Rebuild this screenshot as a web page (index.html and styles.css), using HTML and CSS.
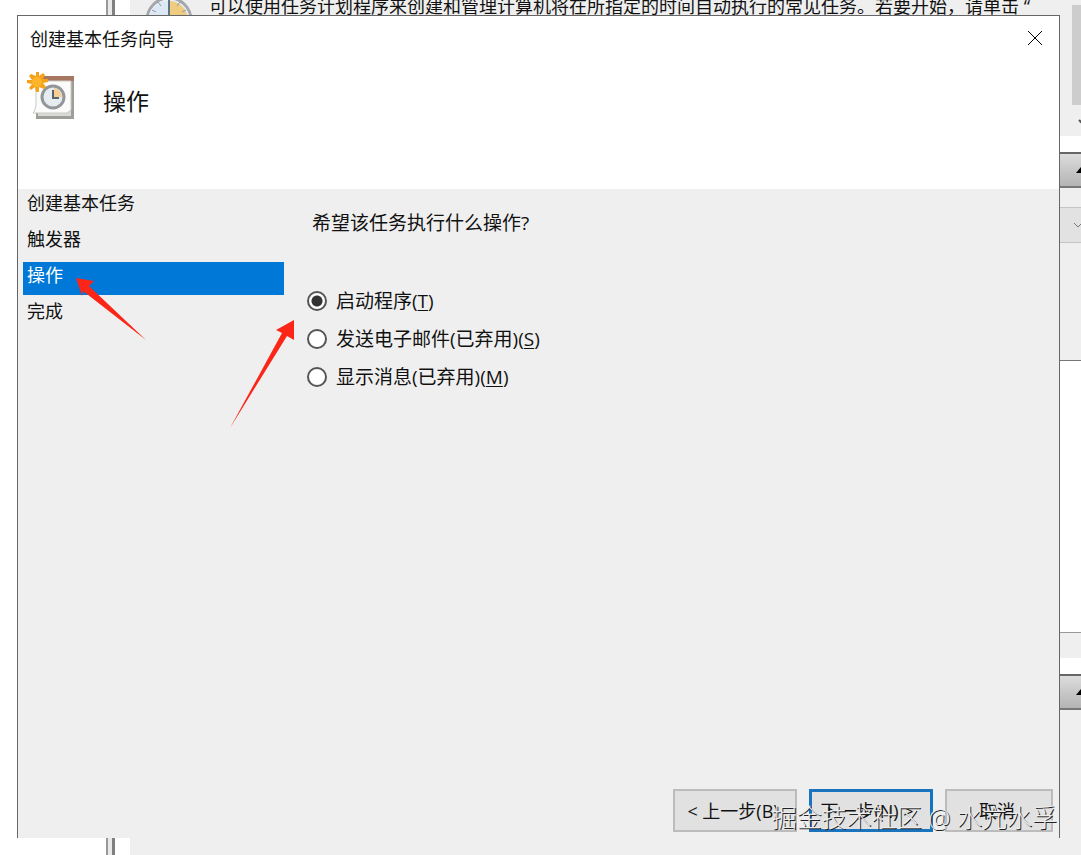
FILE: index.html
```
<!DOCTYPE html>
<html lang="zh-CN">
<head>
    <meta charset="UTF-8">
    <title>创建基本任务向导</title>
    <meta name="viewport" content="width=device-width, initial-scale=1.0">
    <link rel="stylesheet" href="styles.css">
</head>
<body>
    <!-- Task scheduler window behind the wizard -->
    <div class="window">
        <div class="tree"></div>
        <div class="splitter"></div>
        <div class="overview">
            <svg class="overview-icon" viewBox="0 0 48 48">
                <circle cx="24" cy="24" r="22" fill="#dce9f4" stroke="#a4a7ab" stroke-width="3"/>
                <circle cx="24" cy="24" r="20" fill="none" stroke="#eef1f3" stroke-width="1"/>
                <path d="M25 5a19 19 0 0 1 18 19H25z" fill="#f0cc80"/>
                <path d="M24 3v22" stroke="#5f7485" stroke-width="2"/>
                <path d="M7 14l4 2M13 6l3 4M35 6l-3 4M41 14l-4 2" stroke="#8d9ba8" stroke-width="1"/>
            </svg>
            <p class="overview-text">可以使用任务计划程序来创建和管理计算机将在所指定的时间自动执行的常见任务。若要开始，请单击 “</p>
        </div>
        <div class="side">
            <div class="side-scroll">
                <div class="thumb"></div>
                <svg class="side-arrow" viewBox="0 0 10 8"><path d="M1 1l4 4 4-4" fill="none" stroke="#555" stroke-width="2"/></svg>
            </div>
            <div class="side-header">
                <svg class="side-arrow" viewBox="0 0 10 8"><path d="M0 7l5-6 5 6z" fill="#000"/></svg>
            </div>
            <div class="side-filter">
                <svg class="side-arrow" viewBox="0 0 10 8"><path d="M1 2l4 4 4-4" fill="none" stroke="#777" stroke-width="1"/></svg>
            </div>
            <div class="side-panel"></div>
            <div class="side-list"></div>
            <div class="side-strip"></div>
            <div class="side-header">
                <svg class="side-arrow" viewBox="0 0 10 8"><path d="M0 7l5-6 5 6z" fill="#000"/></svg>
            </div>
        </div>
    </div>

    <form class="dialog">
        <header class="dialog-header">
            <div class="title-bar">
                <span>创建基本任务向导</span>
                <button type="button" class="close" aria-label="关闭">
                    <svg viewBox="0 0 16 16"><path d="M1 1l14 14M15 1L1 15" stroke="#000" stroke-width="1"/></svg>
                </button>
            </div>
            <div class="page-title">
                <svg class="task-icon" viewBox="0 0 48 48">
                    <path d="M9 8h38v39H9z" fill="#9d9d99"/>
                    <path d="M11 10h33v34H11z" fill="#d9d9d5"/>
                    <path d="M10 4h37v5H10z" fill="#a77762"/>
                    <path d="M9 9h35v29l-4 3H6c3-4 3-8 3-12z" fill="#fbfbfa" stroke="#c9c9c5"/>
                    <circle cx="26" cy="25" r="11" fill="#e6edf1" stroke="#929599" stroke-width="3"/>
                    <path d="M27 16a9 9 0 0 1 8 9h-8z" fill="#f6ce94"/>
                    <path d="M26 18v8h6" fill="none" stroke="#59636d" stroke-width="2"/>
                    <path d="M9 0h3v4l4-3 2 2-2 4h5v3l-5 1 3 4-2 2-5-2v5H9l-1-5-4 3-2-2 3-4-5-1V8h5L2 4l2-2 5 2z" fill="#f5a21b"/>
                    <circle cx="10" cy="10" r="5" fill="#fdb52c"/>
                </svg>
                <h1>操作</h1>
            </div>
        </header>

        <div class="dialog-body">
            <ul class="steps">
                <li>创建基本任务</li>
                <li>触发器</li>
                <li class="active">操作</li>
                <li>完成</li>
            </ul>
            <fieldset class="options">
                <legend>希望该任务执行什么操作?</legend>
                <label><input type="radio" name="action" checked>启动程序(<u>T</u>)</label>
                <label><input type="radio" name="action">发送电子邮件(已弃用)(<u>S</u>)</label>
                <label><input type="radio" name="action">显示消息(已弃用)(<u>M</u>)</label>
            </fieldset>
        </div>

        <footer class="buttons">
            <button type="button">&lt; 上一步(B)</button>
            <button type="button" class="primary">下一步(N) &gt;</button>
            <button type="button" class="cancel">取消</button>
        </footer>

        <svg class="arrow arrow-step" viewBox="0 0 70 62"><path d="M0 0l18 3-5 5 57 54L7 13l-1 5z" fill="#fb2617"/></svg>
        <svg class="arrow arrow-option" viewBox="0 0 64 108"><path d="M64 0v20l-7-4L0 108 52 13l-6-3z" fill="#fb2617"/></svg>
    </form>

    <div class="watermark">掘金技术社区 @ 水亢水孚</div>
</body>
</html>
```
FILE: styles.css
```
* { box-sizing: border-box; }
body {
    margin: 0;
    min-height: 100vh;
    position: relative;
    overflow: hidden;
    background: #fff;
    color: #111;
    font-family: "Open Sans", "Noto Sans CJK SC", sans-serif;
    font-size: 18px;
}
svg { display: block; }

/* Background window */
.window {
    display: flex;
    height: 100vh;
}
.tree { width: 106px; }
.splitter {
    width: 9px;
    background: #e9e9e9;
    border-left: 2px solid #999;
    border-right: 3px solid #808080;
}
.overview {
    flex: 1;
    display: flex;
    align-items: flex-start;
    gap: 16px;
    margin-left: 15px;
    padding-left: 15px;
    background: #efefef;
    white-space: nowrap;
    overflow: hidden;
}
.overview-icon { width: 48px; height: 48px; margin-top: -4px; }
.overview-text { margin: -6px 0 0; line-height: 24px; }
.side {
    display: flex;
    flex-direction: column;
    width: 21px;
    background: #efefef;
    overflow: hidden;
}
.side-scroll {
    height: 152px;
    padding: 5px 0 0 12px;
    border-bottom: 16px solid #fff;
}
.thumb { height: 100px; margin-bottom: 14px; background: #cdcdcd; }
.side-arrow { flex-shrink: 0; width: 10px; height: 8px; margin-left: 16px; }
.side-scroll .side-arrow { margin-left: 6px; }
.side-header {
    display: flex;
    align-items: center;
    height: 36px;
    border-top: 2px solid #666;
    border-bottom: 2px solid #777;
    background: linear-gradient(#dcdcdc, #b4b4b4);
}
.side-filter {
    display: flex;
    align-items: center;
    height: 36px;
    margin-top: 19px;
    border: solid #c4c4c4;
    border-width: 1px 0;
    background: #e2e2e2;
}
.side-filter .side-arrow { margin-left: 13px; }
.side-panel { height: 118px; border-bottom: 1px solid #777; }
.side-list { height: 271px; background: #fff; }
.side-strip {
    height: 42px;
    border-top: 1px solid #999;
    border-bottom: 16px solid #fff;
}

/* Wizard */
.dialog {
    position: absolute;
    top: 15px;
    right: 21px;
    bottom: 17px;
    left: 17px;
    display: flex;
    flex-direction: column;
    border: 1px solid #666;
    border-bottom: 0;
    background: #efefef;
}
.dialog-header { height: 173px; background: #fff; }
.title-bar {
    display: flex;
    justify-content: space-between;
    align-items: center;
    height: 44px;
    padding: 0 16px 0 12px;
}
.close { padding: 0; border: 0; background: none; }
.close svg { width: 16px; height: 16px; }
.page-title {
    display: flex;
    align-items: center;
    gap: 28px;
    height: 48px;
    margin: 12px 0 0 9px;
}
.task-icon { width: 48px; height: 48px; }
h1 { margin: 8px 0 0; font-size: 23px; font-weight: 400; }
.dialog-body { display: flex; flex: 1; }
.steps {
    width: 266px;
    margin: 0;
    padding: 1px 0 0 5px;
    list-style: none;
}
.steps li {
    height: 33px;
    margin-bottom: 3px;
    padding-left: 4px;
    line-height: 26px;
}
.steps .active { background: #0078d7; color: #fff; }
.options {
    display: flex;
    flex-direction: column;
    gap: 10px;
    min-width: 0;
    margin: 0;
    padding: 0 0 0 23px;
    border: 0;
    font-size: 19px;
    line-height: 28px;
}
.options legend {
    padding: 20px 0 50px 5px;
}
.options label { display: flex; align-items: center; }
.options u { text-underline-offset: 2px; text-decoration-thickness: 1px; }
input[type="radio"] {
    appearance: none;
    width: 20px;
    height: 20px;
    margin: 0 9px 0 0;
    border: 2px solid #555;
    border-radius: 50%;
    background: #fff;
}
input[type="radio"]:checked { background: radial-gradient(circle, #333 5px, #fff 6px); }
.buttons {
    display: flex;
    justify-content: flex-end;
    gap: 12px;
    padding: 0 6px 6px 0;
}
.buttons button {
    width: 124px;
    height: 43px;
    padding: 0 4px 2px 0;
    border: 2px solid #bcbcbc;
    background: #e1e1e1;
    color: #111;
    font: inherit;
    white-space: pre;
}
.buttons .primary { padding-right: 8px; border: 3px solid #1a73bd; }
.buttons .cancel { width: 108px; }

/* Red pointers drawn over the wizard */
.arrow { position: absolute; }
.arrow-step { top: 262px; left: 58px; width: 70px; height: 62px; }
.arrow-option { top: 304px; left: 212px; width: 64px; height: 108px; }

.watermark {
    position: absolute;
    right: 24px;
    bottom: 20px;
    color: #ececec;
    font-size: 25px;
    font-weight: 300;
    line-height: 36px;
    text-shadow: 1px 1px 0 #222;
    white-space: nowrap;
}
```
